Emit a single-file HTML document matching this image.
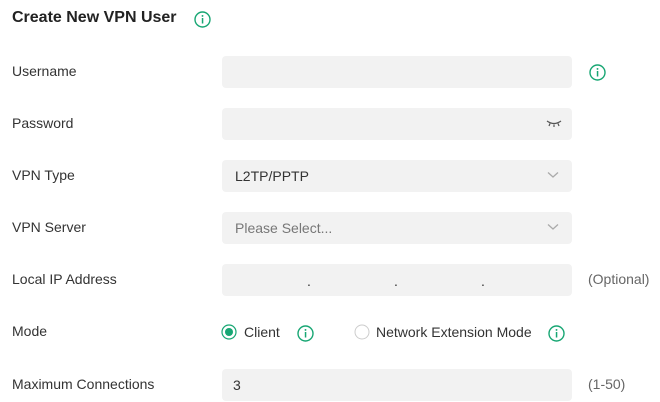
<!DOCTYPE html>
<html><head><meta charset="utf-8"><style>
*{margin:0;padding:0;box-sizing:border-box}
body{width:660px;height:402px;background:#fff;font-family:"Liberation Sans",Arial,sans-serif;color:#333;position:relative;overflow:hidden;font-size:14px}
.a{position:absolute;white-space:nowrap}
.lbl{left:12px;font-size:14px;color:#333;line-height:16px}
.in{position:absolute;left:222px;width:350px;height:32px;background:#f2f2f2;border-radius:4px}
.t{position:absolute;font-size:14px;line-height:16px}
.chev{position:absolute;right:13px;top:11px}
</style></head><body>
<div class="a" style="left:12px;top:9px;font-size:16px;font-weight:bold;color:#222;line-height:18px">Create New VPN User</div>
<svg class="a" style="left:194px;top:11px" width="17" height="17" viewBox="0 0 17 17"><circle cx="8.5" cy="8.5" r="7.5" fill="none" stroke="#17a673" stroke-width="1.4"/><rect x="7.8" y="7" width="1.5" height="5.5" fill="#17a673"/><circle cx="8.5" cy="4.9" r="0.95" fill="#17a673"/></svg>

<div class="a lbl" style="top:63px">Username</div>
<div class="in" style="top:56px"></div>
<svg class="a" style="left:589px;top:64px" width="17" height="17" viewBox="0 0 17 17"><circle cx="8.5" cy="8.5" r="7.5" fill="none" stroke="#17a673" stroke-width="1.4"/><rect x="7.8" y="7" width="1.5" height="5.5" fill="#17a673"/><circle cx="8.5" cy="4.9" r="0.95" fill="#17a673"/></svg>

<div class="a lbl" style="top:115px">Password</div>
<div class="in" style="top:108px"><svg class="chev" style="right:10px;top:11px" width="16" height="10" viewBox="0 0 16 10"><path d="M1 2 Q8 7 15 2 M4 4.5 L3 7 M8 5.5 V8 M12 4.5 L13 7" fill="none" stroke="#555" stroke-width="1.2"/></svg></div>

<div class="a lbl" style="top:167px">VPN Type</div>
<div class="in" style="top:160px"><div class="t" style="left:13px;top:8px;color:#333">L2TP/PPTP</div><svg class="chev" width="12" height="8" viewBox="0 0 12 8"><path d="M1 1.5 L6 6 L11 1.5" fill="none" stroke="#aaa" stroke-width="1.3"/></svg></div>

<div class="a lbl" style="top:219px">VPN Server</div>
<div class="in" style="top:212px"><div class="t" style="left:13px;top:8px;color:#777">Please Select...</div><svg class="chev" width="12" height="8" viewBox="0 0 12 8"><path d="M1 1.5 L6 6 L11 1.5" fill="none" stroke="#aaa" stroke-width="1.3"/></svg></div>

<div class="a lbl" style="top:271px">Local IP Address</div>
<div class="in" style="top:264px"><div class="t" style="left:85px;top:9px">.</div><div class="t" style="left:172px;top:9px">.</div><div class="t" style="left:259px;top:9px">.</div></div>
<div class="a" style="left:588px;top:271px;color:#666;line-height:16px">(Optional)</div>

<div class="a lbl" style="top:323px">Mode</div>
<svg class="a" style="left:221px;top:324px" width="16" height="16" viewBox="0 0 16 16"><circle cx="8" cy="8" r="7" fill="#fff" stroke="#17a673" stroke-width="1.2"/><circle cx="8" cy="8" r="4" fill="#17a673"/></svg>
<div class="a" style="left:244px;top:324px;line-height:16px">Client</div>
<svg class="a" style="left:297px;top:325px" width="17" height="17" viewBox="0 0 17 17"><circle cx="8.5" cy="8.5" r="7.5" fill="none" stroke="#17a673" stroke-width="1.4"/><rect x="7.8" y="7" width="1.5" height="5.5" fill="#17a673"/><circle cx="8.5" cy="4.9" r="0.95" fill="#17a673"/></svg>
<svg class="a" style="left:354px;top:324px" width="16" height="16" viewBox="0 0 16 16"><circle cx="8" cy="8" r="7" fill="#fff" stroke="#ccc" stroke-width="1"/></svg>
<div class="a" style="left:376px;top:324px;line-height:16px">Network Extension Mode</div>
<svg class="a" style="left:548px;top:325px" width="17" height="17" viewBox="0 0 17 17"><circle cx="8.5" cy="8.5" r="7.5" fill="none" stroke="#17a673" stroke-width="1.4"/><rect x="7.8" y="7" width="1.5" height="5.5" fill="#17a673"/><circle cx="8.5" cy="4.9" r="0.95" fill="#17a673"/></svg>

<div class="a lbl" style="top:376px">Maximum Connections</div>
<div class="in" style="top:369px"><div class="t" style="left:11px;top:8px">3</div></div>
<div class="a" style="left:588px;top:376px;color:#666;line-height:16px">(1-50)</div>
</body></html>
